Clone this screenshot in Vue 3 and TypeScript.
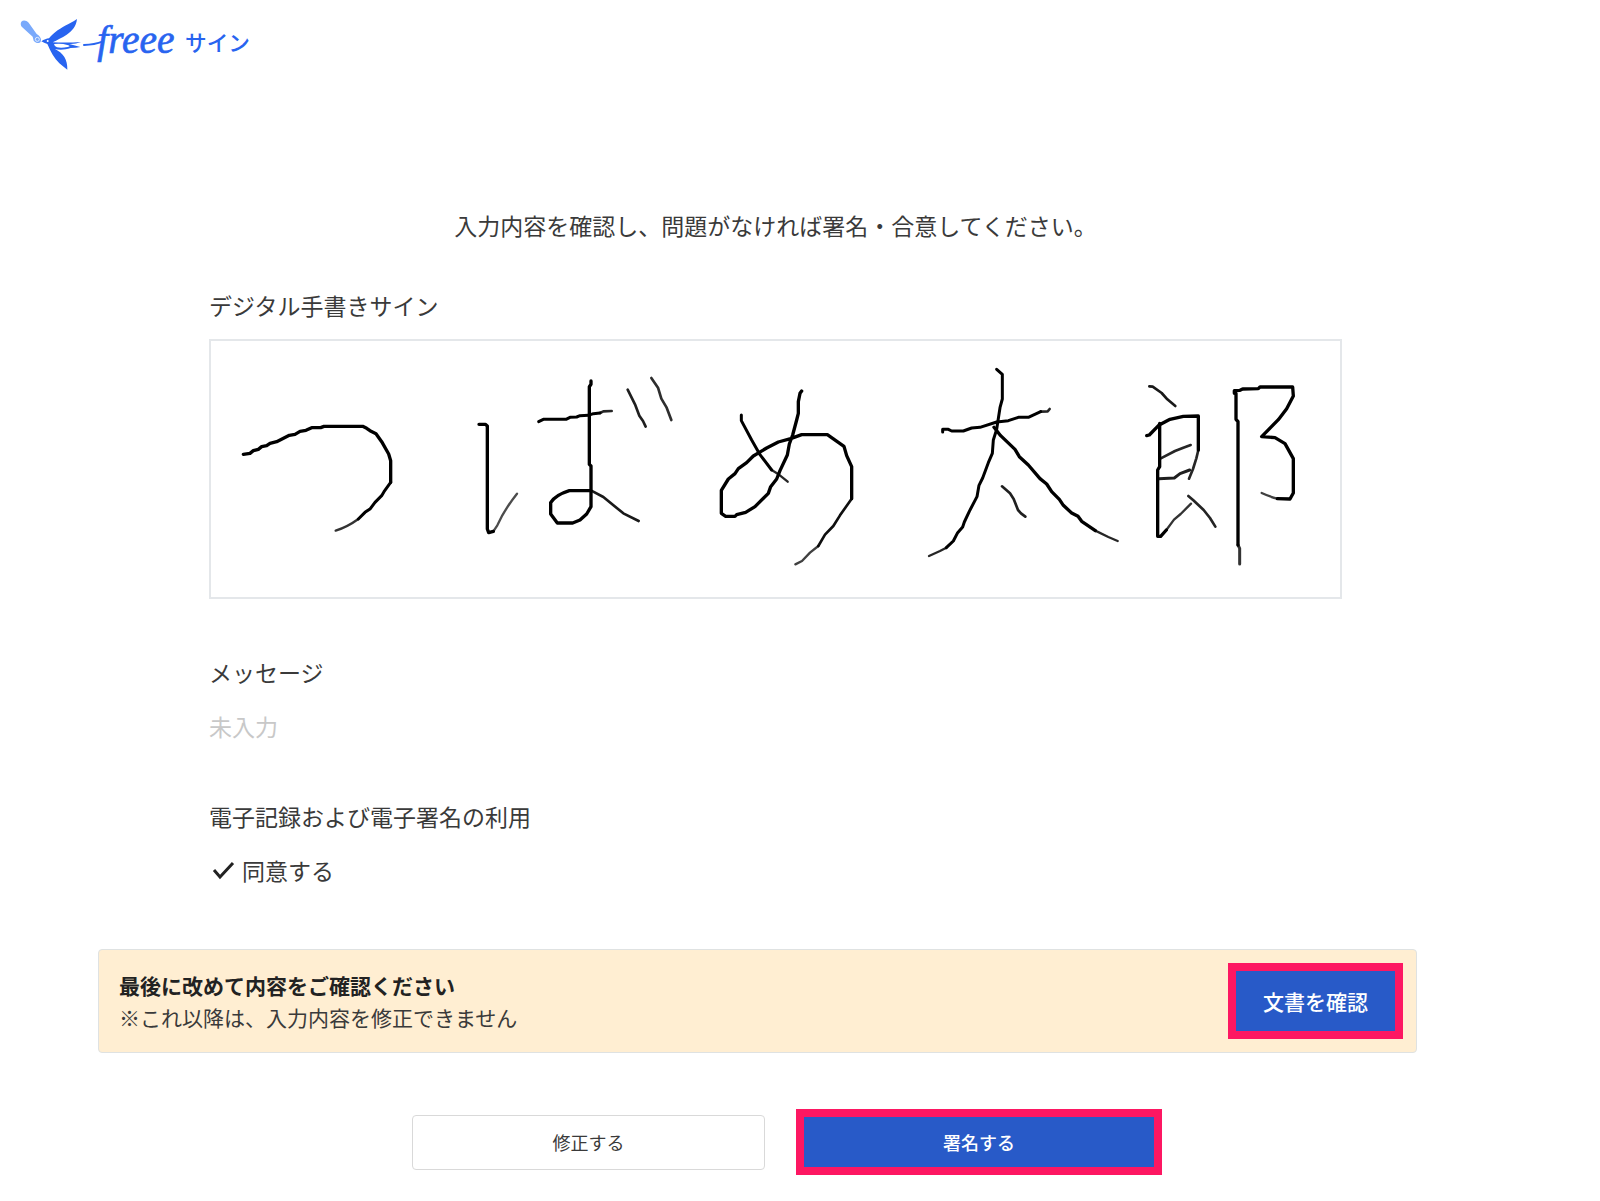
<script setup lang="ts">
interface Stroke {
  d: string
  w: number
  o?: number
}

interface Character {
  name: string
  offset: number
  strokes: Stroke[]
}

const signature: Character[] = [
  {
    name: 'tsu',
    offset: 0,
    strokes: [
      { d: 'M130 373 L150 370 L160 362 L175 358 L185 350 L200 347 L210 340 L230 335 L268 316 L285 313 L300 304 L318 301 L335 293 L362 293 L372 289 L488 289 L500 295 L510 302 L528 311 L545 335 L566 372 L572 392 L572 457', w: 10 },
      { d: 'M572 457 L552 485 L545 497 L525 517 L511 536 L495 547 L475 567', w: 9 },
      { d: 'M475 567 Q442 591 407 602', w: 7, o: 0.8 },
    ],
  },
  {
    name: 'ba',
    offset: 780,
    strokes: [
      { d: 'M57 283 L76 283 L82 288 L82 597 L86 608 L100 604', w: 10 },
      { d: 'M100 604 L112 586 L127 556 Q150 517 171 491', w: 7, o: 0.7 },
      { d: 'M236 275 L250 268 L318 268 L330 262 L350 261 L360 257 L385 256 L400 251 L420 249', w: 9 },
      { d: 'M420 249 L430 244 L455 243', w: 8, o: 0.85 },
      { d: 'M393 153 L393 163 L388 170 L388 403 L393 408 L393 530 L380 552 L360 570 L338 579 L292 579 L272 552 L272 518 Q286 495 328 482 L394 482', w: 10 },
      { d: 'M394 482 L430 501 L490 550 L536 573', w: 8, o: 0.9 },
      { d: 'M503 179 L525 223 L538 257 L549 273 L557 290', w: 8, o: 0.88 },
      { d: 'M574 144 L594 173 L604 206 L620 233 L634 270', w: 8, o: 0.82 },
    ],
  },
  {
    name: 'me',
    offset: 1500,
    strokes: [
      { d: 'M124 255 L124 272 L155 330 L180 374 L215 420', w: 9 },
      { d: 'M215 420 L233 431 L263 455', w: 7, o: 0.85 },
      { d: 'M305 183 L300 190 L295 215 L295 250 L290 270 L278 315 L268 342 L262 375 L240 422 L230 447 L212 470 L205 490 L165 530 L137 547 L110 554 L105 559 L77 559 L64 550 L64 481 L85 447 L105 431 L115 416 L140 398 L160 378 L200 354 L235 336 L272 326 L305 314 L382 314 L432 349 L440 377 L455 410 L455 506', w: 10 },
      { d: 'M455 506 L420 556 L400 588 L375 614 L355 648', w: 8, o: 0.94 },
      { d: 'M355 648 L330 668 L306 693 L286 703', w: 7, o: 0.75 },
    ],
  },
  {
    name: 'ta',
    offset: 2100,
    strokes: [
      { d: 'M290 118 L307 133 L307 207 L300 233 L290 298 L280 330 L277 370 L265 398 L248 444 L237 466 L231 500 L208 544 L193 576 L188 591 L173 608 L160 633 L139 653', w: 9 },
      { d: 'M139 653 L120 663 L87 678', w: 7, o: 0.85 },
      { d: 'M128 306 L128 298 L145 298 L155 303 L190 303 L215 294 L240 292 L290 276 L325 272 L355 262 L385 262 L422 245', w: 9 },
      { d: 'M422 245 L443 244 L449 237', w: 8, o: 0.85 },
      { d: 'M282 292 L302 317 L345 358 L358 380 L385 405 L420 446 L440 462 L455 485 L478 508 L490 526 L515 549 L534 559 L545 574 L586 602', w: 10 },
      { d: 'M586 602 L625 621 L653 633', w: 7, o: 0.85 },
      { d: 'M306 469 L330 490 L341 507 L354 540 L363 550 L376 560', w: 8, o: 0.88 },
    ],
  },
  {
    name: 'rou',
    offset: 2760,
    strokes: [
      { d: 'M88 169 L98 170 L125 189 L142 208 L166 228', w: 8, o: 0.9 },
      { d: 'M80 317 L88 315 L116 286 L150 268 L190 259 L235 258 L235 360', w: 10 },
      { d: 'M235 360 L229 385 L219 417 L207 446', w: 8, o: 0.85 },
      { d: 'M119 280 L119 410 L113 420 L113 619 L122 619 L139 600', w: 10 },
      { d: 'M139 600 L162 569 L182 552 L213 521', w: 7, o: 0.8 },
      { d: 'M121 386 L165 363 L190 353 L212 345', w: 8, o: 0.85 },
      { d: 'M116 446 L163 444 L180 431 L209 420', w: 9, o: 0.88 },
      { d: 'M205 498 L220 511 L251 540 L270 564 L286 590', w: 8, o: 0.86 },
      { d: 'M343 190 L343 182 L360 181 L368 177 L415 176 L420 171 L518 171 L520 198 L500 236 L475 269 L425 320 L465 323 L495 341 L520 386 L520 489 L510 507 L472 506', w: 10 },
      { d: 'M472 506 Q449 500 425 489', w: 7, o: 0.75 },
      { d: 'M348 190 L348 268 L354 275 L354 645', w: 10 },
      { d: 'M354 645 L359 655 L359 702', w: 9, o: 0.8 },
    ],
  },
]

const notice = {
  title: '最後に改めて内容をご確認ください',
  note: '※これ以降は、入力内容を修正できません',
}
</script>

<template>
  <div class="page">
    <header class="header">
      <a class="brand" href="#" aria-label="freee サイン">
        <svg class="logo" viewBox="0 0 810 270">
          <path fill="#79a9fb" d="M64 65 C70 59 79 61 86 68 L110 102 C119 108 126 116 122 125 C117 132 108 130 101 122 L98 110 L66 81 C62 77 61 70 64 65 Z" />
          <circle cx="112" cy="118" r="6" fill="none" stroke="#e4eeff" stroke-width="3" />
          <path fill="#2864f0" d="M124 124 C132 119 140 116 147 115 C160 98 184 83 204 73 Q222 64 231 57 C229 78 216 94 200 104 C186 113 171 120 158 127 Q204 129 243 126 Q226 133 208 132 L241 141 Q228 144 212 144 C195 150 177 150 165 147 C190 160 203 178 202 209 C186 197 169 183 158 164 C151 152 146 141 142 132 Q132 129 124 124 Z" />
          <path fill="#fff" d="M162 132 Q187 130 202 135 Q215 139 203 141 Q184 145 171 142 Q163 139 162 132 Z" />
          <circle cx="143" cy="123" r="3" fill="#fff" />
          <path fill="none" stroke="#2864f0" stroke-width="6" stroke-linecap="round" d="M252 135 Q283 134 309 124" />
          <text class="wordmark" x="292" y="160">freee</text>
          <text class="product" x="555" y="152">サイン</text>
        </svg>
      </a>
    </header>

    <main class="main">
      <div class="details">
        <p class="lead">入力内容を確認し、問題がなければ署名・合意してください。</p>

        <section class="field">
          <h2 class="label">デジタル手書きサイン</h2>
          <div class="pad">
            <svg class="ink" viewBox="33 33 3387 768" role="img" aria-label="つばめ太郎">
              <g v-for="c in signature" :key="c.name" :transform="`translate(${c.offset} 0)`">
                <path v-for="(s, i) in c.strokes" :key="i" :d="s.d" :stroke-width="s.w" :stroke-opacity="s.o ?? 1" />
              </g>
            </svg>
          </div>
        </section>

        <section class="field message">
          <h2 class="label">メッセージ</h2>
          <p class="value empty">未入力</p>
        </section>

        <section class="field consent">
          <h2 class="label">電子記録および電子署名の利用</h2>
          <p class="value agreed">
            <svg class="check" viewBox="0 0 24 24" aria-hidden="true">
              <path d="M2 12 L8 19 L21 5" />
            </svg>
            <span>同意する</span>
          </p>
        </section>
      </div>

      <div class="notice">
        <div>
          <p class="notice-title">{{ notice.title }}</p>
          <p class="notice-note">{{ notice.note }}</p>
        </div>
        <button type="button" class="primary review">文書を確認</button>
      </div>

      <div class="actions">
        <button type="button" class="secondary">修正する</button>
        <button type="button" class="primary sign">署名する</button>
      </div>
    </main>
  </div>
</template>

<style>
body {
  margin: 0;
  background: #fff;
}
</style>

<style scoped>
.page {
  color: #3a3a3a;
  font-family: "Noto Sans CJK JP", "Noto Sans", sans-serif;
  font-size: 23px;
  line-height: 34px;
}

.page * {
  box-sizing: border-box;
}

h2,
p {
  margin: 0;
  font-size: inherit;
  font-weight: 400;
}

.header {
  height: 90px;
}

.brand {
  display: inline-block;
}

.logo {
  display: block;
  width: 270px;
  height: 90px;
  fill: #2864f0;
}

.wordmark {
  font: italic 118px "Liberation Serif", serif;
  stroke: #2864f0;
  stroke-width: 2px;
}

.product {
  font-size: 65px;
  font-weight: 500;
}

.main {
  padding: 118px 183px 24px 98px;
}

.details {
  padding: 0 75px 0 111px;
}

.lead {
  margin-bottom: 46px;
  text-align: center;
}

.pad {
  margin-top: 17px;
  border: 2px solid #e4e7ea;
}

.ink {
  display: block;
  width: 100%;
  fill: none;
  stroke: #000;
  stroke-linecap: round;
  stroke-linejoin: round;
}

.message {
  margin-top: 56px;
}

.value {
  margin-top: 20px;
}

.empty {
  color: #c8c8c8;
}

.consent {
  margin-top: 56px;
}

.agreed {
  display: flex;
  align-items: center;
  gap: 6px;
  padding-left: 3px;
}

.check {
  width: 24px;
  height: 24px;
  fill: none;
  stroke: #222;
  stroke-width: 3;
}

.notice {
  display: flex;
  align-items: center;
  justify-content: space-between;
  margin-top: 62px;
  padding: 13px;
  border: 1px solid #dfe2e2;
  border-radius: 4px;
  background: #ffeed2;
  font-size: 21px;
  line-height: 32px;
}

.notice > div {
  padding-left: 7px;
}

.notice-title {
  color: #222;
  font-weight: 700;
}

button {
  padding: 0;
  font-family: inherit;
  cursor: pointer;
}

.primary {
  border: 8px solid #fd1762;
  background: #285ac8;
  color: #fff;
  font-weight: 500;
}

.review {
  width: 175px;
  height: 76px;
  font-size: 21px;
}

.actions {
  display: flex;
  align-items: center;
  justify-content: center;
  gap: 31px;
  margin-top: 56px;
  padding-left: 59px;
}

.secondary {
  width: 353px;
  height: 55px;
  border: 1px solid #d9d9d9;
  border-radius: 4px;
  background: #fff;
  color: #3a3a3a;
  font-size: 18px;
}

.sign {
  width: 366px;
  height: 66px;
  font-size: 18px;
}
</style>
